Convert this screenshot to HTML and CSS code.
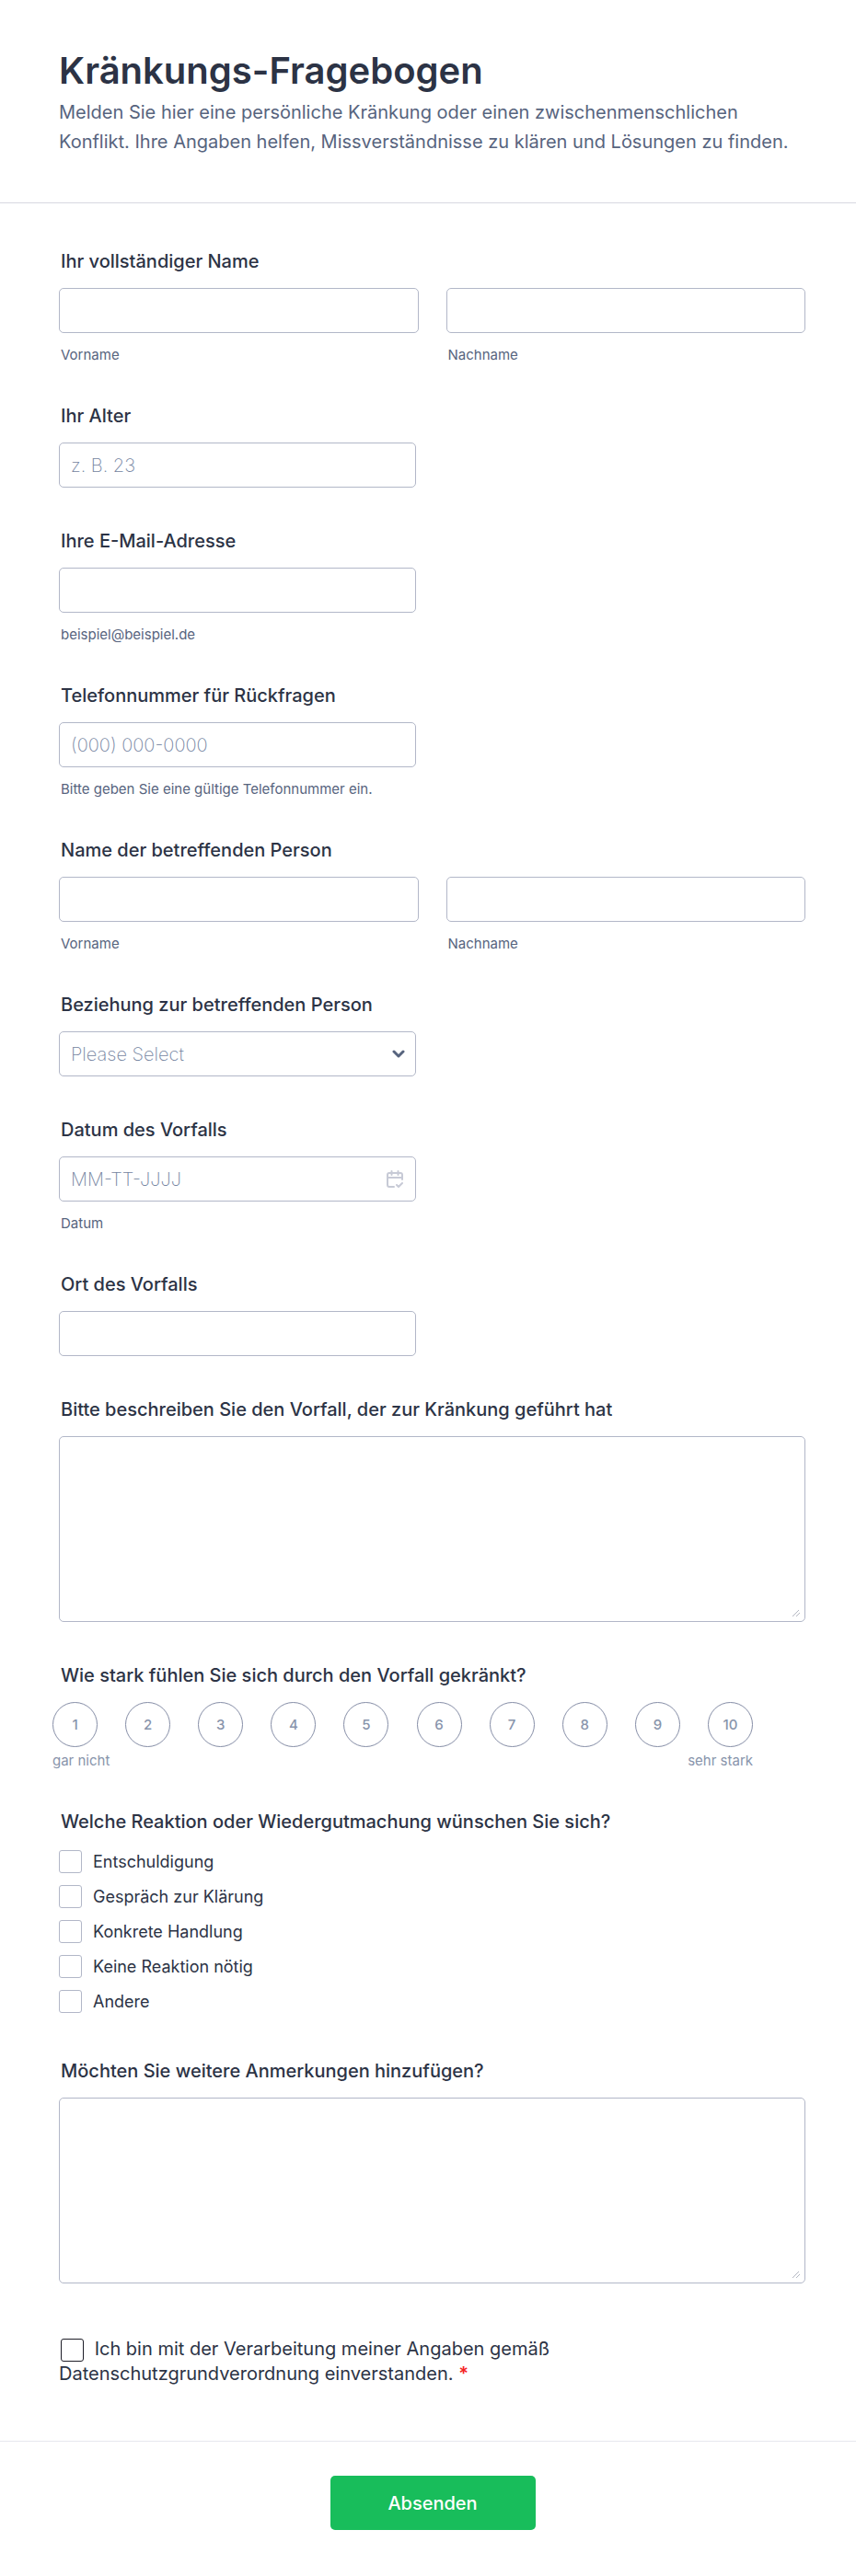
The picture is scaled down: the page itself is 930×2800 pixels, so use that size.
FILE: index.html
```html
<!DOCTYPE html>
<html lang="de">
<head>
<meta charset="utf-8">
<meta name="viewport" content="width=device-width, initial-scale=1">
<title>Kränkungs-Fragebogen</title>
<link rel="stylesheet" href="styles.css">
</head>
<body>
<form class="form">
  <header class="form-header">
    <h1 class="title">Kränkungs-Fragebogen</h1>
    <p class="subtitle">Melden Sie hier eine persönliche Kränkung oder einen zwischenmenschlichen Konflikt. Ihre Angaben helfen, Missverständnisse zu klären und Lösungen zu finden.</p>
  </header>

  <div class="fields">
    <fieldset class="field">
      <legend class="label">Ihr vollständiger Name</legend>
      <div class="columns">
        <div class="column">
          <input class="control" id="own-first" type="text">
          <label class="hint" for="own-first">Vorname</label>
        </div>
        <div class="column">
          <input class="control" id="own-last" type="text">
          <label class="hint" for="own-last">Nachname</label>
        </div>
      </div>
    </fieldset>

    <div class="field">
      <label class="label" for="age">Ihr Alter</label>
      <input class="control narrow" id="age" type="text" placeholder="z. B. 23">
    </div>

    <div class="field">
      <label class="label" for="email">Ihre E-Mail-Adresse</label>
      <input class="control narrow" id="email" type="email">
      <label class="hint" for="email">beispiel@beispiel.de</label>
    </div>

    <div class="field">
      <label class="label" for="phone">Telefonnummer für Rückfragen</label>
      <input class="control narrow" id="phone" type="tel" placeholder="(000) 000-0000">
      <label class="hint" for="phone">Bitte geben Sie eine gültige Telefonnummer ein.</label>
    </div>

    <fieldset class="field">
      <legend class="label">Name der betreffenden Person</legend>
      <div class="columns">
        <div class="column">
          <input class="control" id="other-first" type="text">
          <label class="hint" for="other-first">Vorname</label>
        </div>
        <div class="column">
          <input class="control" id="other-last" type="text">
          <label class="hint" for="other-last">Nachname</label>
        </div>
      </div>
    </fieldset>

    <div class="field">
      <label class="label" for="relation">Beziehung zur betreffenden Person</label>
      <div class="with-icon narrow">
        <select class="control select" id="relation">
          <option>Please Select</option>
        </select>
        <svg class="icon chevron" viewBox="0 0 14 10" aria-hidden="true"><path d="M2 2l5 5 5-5"/></svg>
      </div>
    </div>

    <div class="field">
      <label class="label" for="date">Datum des Vorfalls</label>
      <div class="with-icon narrow">
        <input class="control" id="date" type="text" placeholder="MM-TT-JJJJ">
        <svg class="icon calendar" viewBox="0 0 18 20" aria-hidden="true"><path d="M8 18H3a2 2 0 0 1-2-2V5a2 2 0 0 1 2-2h12a2 2 0 0 1 2 2v5M1 8h16M5.500 1v4M12.500 1v4M11 16l2 2 4-4"/></svg>
      </div>
      <label class="hint" for="date">Datum</label>
    </div>

    <div class="field">
      <label class="label" for="place">Ort des Vorfalls</label>
      <input class="control narrow" id="place" type="text">
    </div>

    <div class="field">
      <label class="label" for="story">Bitte beschreiben Sie den Vorfall, der zur Kränkung geführt hat</label>
      <div class="with-icon">
        <textarea class="control area" id="story"></textarea>
        <svg class="grip" viewBox="0 0 10 9" aria-hidden="true"><path d="M1 8l7-7M5 8l4-4"/></svg>
      </div>
    </div>

    <fieldset class="field">
      <legend class="label">Wie stark fühlen Sie sich durch den Vorfall gekränkt?</legend>
      <div class="scale">
        <div class="scale-row">
          <label class="scale-item"><input class="scale-dot" type="radio" name="hurt"><span class="scale-number">1</span></label>
          <label class="scale-item"><input class="scale-dot" type="radio" name="hurt"><span class="scale-number">2</span></label>
          <label class="scale-item"><input class="scale-dot" type="radio" name="hurt"><span class="scale-number">3</span></label>
          <label class="scale-item"><input class="scale-dot" type="radio" name="hurt"><span class="scale-number">4</span></label>
          <label class="scale-item"><input class="scale-dot" type="radio" name="hurt"><span class="scale-number">5</span></label>
          <label class="scale-item"><input class="scale-dot" type="radio" name="hurt"><span class="scale-number">6</span></label>
          <label class="scale-item"><input class="scale-dot" type="radio" name="hurt"><span class="scale-number">7</span></label>
          <label class="scale-item"><input class="scale-dot" type="radio" name="hurt"><span class="scale-number">8</span></label>
          <label class="scale-item"><input class="scale-dot" type="radio" name="hurt"><span class="scale-number">9</span></label>
          <label class="scale-item"><input class="scale-dot" type="radio" name="hurt"><span class="scale-number">10</span></label>
        </div>
        <div class="scale-row scale-ends"><span>gar nicht</span><span>sehr stark</span></div>
      </div>
    </fieldset>

    <fieldset class="field">
      <legend class="label">Welche Reaktion oder Wiedergutmachung wünschen Sie sich?</legend>
      <div class="choices">
        <label class="choice"><input class="tick" type="checkbox">Entschuldigung</label>
        <label class="choice"><input class="tick" type="checkbox">Gespräch zur Klärung</label>
        <label class="choice"><input class="tick" type="checkbox">Konkrete Handlung</label>
        <label class="choice"><input class="tick" type="checkbox">Keine Reaktion nötig</label>
        <label class="choice"><input class="tick" type="checkbox">Andere</label>
      </div>
    </fieldset>

    <div class="field">
      <label class="label" for="notes">Möchten Sie weitere Anmerkungen hinzufügen?</label>
      <div class="with-icon">
        <textarea class="control area" id="notes"></textarea>
        <svg class="grip" viewBox="0 0 10 9" aria-hidden="true"><path d="M1 8l7-7M5 8l4-4"/></svg>
      </div>
    </div>

    <div class="consent">
      <input class="tick tick-dark" id="consent" type="checkbox" required>
      <label for="consent">Ich bin mit der Verarbeitung meiner Angaben gemäß Datenschutzgrundverordnung einverstanden.</label>
      <span class="required">*</span>
    </div>
  </div>

  <footer class="form-footer">
    <button class="submit" type="submit">Absenden</button>
  </footer>
</form>
</body>
</html>
```
FILE: styles.css
```css
* { box-sizing: border-box; }

body {
  margin: 0;
  background: #fff;
  color: #2c3345;
  font-family: Inter, "Liberation Sans", sans-serif;
  font-size: 20px;
}

.form-header {
  padding: 52px 54px 50px 64px;
  border-bottom: 1px solid #d7d8e1;
}

.title {
  margin: 0;
  font-size: 40px;
  line-height: 50px;
  font-weight: 600;
}

.subtitle {
  margin: 4px 0 0;
  color: #57647e;
  font-size: 20px;
  line-height: 32px;
  font-weight: 400;
}

.fields {
  display: flex;
  flex-direction: column;
  gap: 46px;
  padding: 51px 55px 59px 64px;
}

.field {
  display: flex;
  flex-direction: column;
  min-width: 0;
  margin: 0;
  padding: 0;
  border: 0;
}

.label {
  margin-bottom: 17px;
  padding: 0 2px;
  font-size: 20px;
  line-height: 24px;
  font-weight: 500;
}

.columns {
  display: grid;
  grid-template-columns: 1fr 1fr;
  gap: 30px;
}

.column {
  display: flex;
  flex-direction: column;
  min-width: 0;
}

.control {
  display: block;
  width: 100%;
  height: 49px;
  margin: 0;
  padding: 0 12px;
  border: 1px solid #b2b7c8;
  border-radius: 5px;
  background: #fff;
  color: #2c3345;
  font: inherit;
  font-weight: 200;
}

.control::placeholder { color: #74849f; opacity: 1; }

.narrow { width: 100%; max-width: 388px; }

.area { height: 202px; resize: none; }

.hint {
  margin-top: 15px;
  padding-left: 2px;
  color: #57647e;
  font-size: 15px;
  line-height: 17px;
}

.with-icon { position: relative; }

.select { appearance: none; color: #74849f; }

.icon {
  position: absolute;
  top: 50%;
  transform: translateY(-50%);
  fill: none;
  stroke-linecap: round;
  stroke-linejoin: round;
  pointer-events: none;
}

.chevron {
  right: 12px;
  width: 14px;
  height: 10px;
  stroke: #57647e;
  stroke-width: 3;
}

.calendar {
  right: 14px;
  width: 18px;
  height: 20px;
  stroke: #c7cad6;
  stroke-width: 2;
}

.grip {
  position: absolute;
  right: 5px;
  bottom: 5px;
  width: 10px;
  height: 9px;
  fill: none;
  stroke: #b4b8c2;
  stroke-width: 1;
  pointer-events: none;
}

.scale {
  max-width: 761px;
  margin-left: -7px;
}

.scale-row {
  display: flex;
  justify-content: space-between;
}

.scale-item {
  display: grid;
  place-items: center;
}

.scale-dot {
  grid-area: 1 / 1;
  appearance: none;
  width: 49px;
  height: 49px;
  margin: 0;
  border: 1px solid #858da6;
  border-radius: 50%;
}

.scale-number {
  grid-area: 1 / 1;
  color: #8894ab;
  font-size: 15px;
  font-weight: 500;
}

.scale-ends {
  margin-top: 6px;
  color: #8894ab;
  font-size: 15px;
  line-height: 17px;
}

.choices {
  display: grid;
  gap: 13px;
  padding: 2px 0 5px;
}

.choice {
  display: flex;
  align-items: center;
  gap: 12px;
  font-size: 18px;
  line-height: 24px;
}

.tick {
  appearance: none;
  flex: none;
  width: 25px;
  height: 25px;
  margin: 0;
  border: 1px solid #b2b7c8;
  border-radius: 3px;
  background: #fff;
}

.consent {
  max-width: 562px;
  margin-top: 12px;
  line-height: 27px;
}

.tick-dark {
  margin: 0 6px 0 2px;
  border-color: #1e1e28;
  vertical-align: middle;
}

.required {
  color: #f5231f;
  font-weight: 600;
}

.form-footer {
  display: flex;
  justify-content: center;
  padding: 37px 54px 50px 64px;
  border-top: 1px solid #e6e7ee;
}

.submit {
  min-width: 223px;
  height: 59px;
  padding: 0 24px;
  border: 0;
  border-radius: 5px;
  background: #18bd5b;
  color: #fff;
  font: inherit;
  font-weight: 500;
}
```
